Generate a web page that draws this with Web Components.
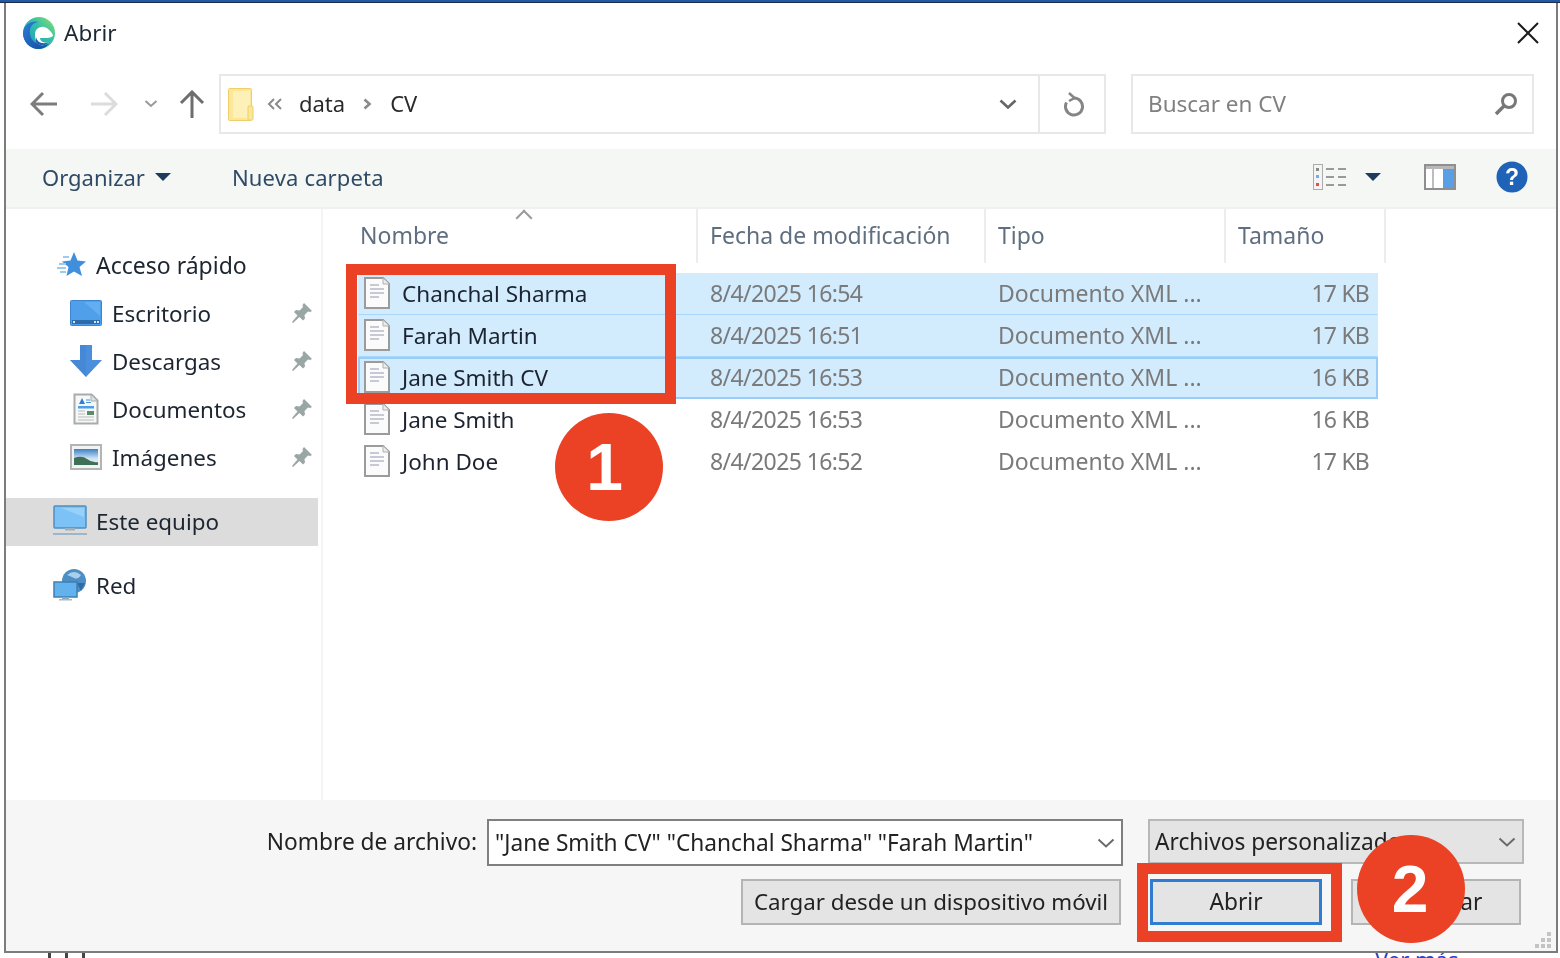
<!DOCTYPE html>
<html lang="es">
<head>
<meta charset="utf-8">
<title>Abrir</title>
<style>
    html, body { margin: 0; height: 100%; background: #fff; overflow: hidden; }
    body { font-family: "Noto Sans", "Open Sans", sans-serif; }
</style>
</head>
<body>
<top-edge></top-edge>
<open-dialog>
    <dialog-title slot="title">Abrir</dialog-title>
    <address-bar slot="address"></address-bar>
    <tool-bar slot="tools"></tool-bar>

    <nav-item slot="nav" icon="star" head>Acceso rápido</nav-item>
    <nav-item slot="nav" icon="desktop" pinned>Escritorio</nav-item>
    <nav-item slot="nav" icon="download" pinned>Descargas</nav-item>
    <nav-item slot="nav" icon="docs" pinned>Documentos</nav-item>
    <nav-item slot="nav" icon="pictures" pinned>Imágenes</nav-item>
    <nav-item slot="nav" icon="pc" head lift active style="margin-top:17px">Este equipo</nav-item>
    <nav-item slot="nav" icon="net" head lift style="margin-top:16px">Red</nav-item>

    <file-row slot="files" selected date="8/4/2025 16:54" size="17 KB">Chanchal Sharma</file-row>
    <file-row slot="files" selected date="8/4/2025 16:51" size="17 KB">Farah Martin</file-row>
    <file-row slot="files" selected focused date="8/4/2025 16:53" size="16 KB">Jane Smith CV</file-row>
    <file-row slot="files" date="8/4/2025 16:53" size="16 KB">Jane Smith</file-row>
    <file-row slot="files" date="8/4/2025 16:52" size="17 KB">John Doe</file-row>

    <dialog-footer slot="footer"></dialog-footer>
</open-dialog>
<page-behind></page-behind>

<red-box style="left:346px;top:264px;width:330px;height:140px"></red-box>
<red-box style="left:1137px;top:863px;width:205px;height:79px"></red-box>
<step-badge style="left:555px;top:413px;padding-right:9px">1</step-badge>
<step-badge style="left:1357px;top:835px;padding-right:2px">2</step-badge>

<script>
const ICONS = {
    star: `<svg width="34" height="26" viewBox="0 0 34 26"><path d="M21 0l3.500 8.500 8.500 1-6.500 5.500L29 24l-8-4.500L13.500 24l2-9L9 9.500l8.500-1z" fill="#3f8fdc"/><path d="M10 5h6M6 12h7M4 16h9M7 20h6" stroke="#9ccbf0" stroke-width="1.800"/></svg>`,
    desktop: `<svg width="32" height="26" viewBox="0 0 32 26"><rect x=".5" y=".5" width="31" height="25" rx="1" fill="#4f9fea" stroke="#3c86cf"/><path d="M2 2h28v14L14 2z" fill="#63aef0"/><rect x="2" y="20" width="28" height="4" fill="#2d6ca8"/><rect x="3" y="21" width="2" height="2" fill="#cfe6fa"/><rect x="24" y="21" width="2" height="2" fill="#cfe6fa"/><rect x="27" y="21" width="2" height="2" fill="#cfe6fa"/></svg>`,
    download: `<svg width="32" height="32" viewBox="0 0 32 32"><path d="M10 0h12v15h10L16 32 0 15h10z" fill="#4b8fdc"/><path d="M10 0h6v32L0 15h10z" fill="#3f80cc" opacity=".45"/></svg>`,
    docs: `<svg style="margin-left:3px" width="26" height="32" viewBox="0 0 26 32"><path d="M1.500 1.500h17l6 6v23h-23z" fill="#f6f7f7" stroke="#a9acac" stroke-width="2"/><path d="M18 2v6h6" fill="#dfe2e2" stroke="#a9acac"/><path d="M6 11l3-6 3 6z" fill="#2f7fd6"/><path d="M13 7h4M13 9.500h5" stroke="#4a90d9"/><rect x="5" y="13" width="16" height="2.500" fill="#4ba0e8"/><path d="M5 18h7M5 21h7M5 24h16M5 27h16" stroke="#b8bcbc"/><rect x="14" y="18" width="7" height="4" fill="#5d8a6a"/></svg>`,
    pictures: `<svg width="32" height="26" viewBox="0 0 32 26"><defs><linearGradient id="sky" x1="0" y1="0" x2="0" y2="1"><stop offset="0" stop-color="#3c7fc4"/><stop offset=".6" stop-color="#cfe4f4"/><stop offset="1" stop-color="#e6f0f6"/></linearGradient></defs><rect x="1" y="1" width="30" height="24" fill="#f2f3f3" stroke="#b3b5b5" stroke-width="2"/><rect x="4" y="5" width="24" height="16" fill="url(#sky)"/><path d="M4 14q8-3 13 1t11 3v3H4z" fill="#3f6f55"/></svg>`,
    pc: `<svg width="34" height="32" viewBox="0 0 34 32"><rect x="1" y="1" width="32" height="22" rx="1" fill="#7cc2f6" stroke="#4f8fbf" stroke-width="1.500"/><path d="M3 3h28v9L8 3z" fill="#97d0f8"/><rect x="12" y="23" width="10" height="2.500" fill="#9fb0bd"/><rect x="0" y="28" width="34" height="2" fill="#9fb6c8"/></svg>`,
    net: `<svg width="34" height="32" viewBox="0 0 34 32"><circle cx="21" cy="12" r="12" fill="#4d8ec4"/><path d="M14 6q7-6 14 0-3 5-7 3t-7-3z" fill="#a9cfe9"/><path d="M24 14l8 0-4 8z" fill="#2f6ea5"/><rect x="1" y="13" width="23" height="15" fill="#62b2ee" stroke="#3f7fb3" stroke-width="1.500"/><rect x="9" y="28" width="7" height="2" fill="#8ea7b9"/><rect x="6" y="30" width="13" height="1.500" fill="#a8bac8"/></svg>`,
    pin: `<svg width="22" height="22" viewBox="0 0 22 22"><path d="M13 1l8 8-2 1-2-.5-3.500 3.500.5 3.500-2 2-3.500-3.500L2 21l-1-1 5.500-6.500L3 10l2-2 3.500.5L12 5l-.5-2z" fill="#9aa6a6"/></svg>`,
    file: `<svg width="26" height="32" viewBox="0 0 26 32"><path d="M1 1h18l6 6v24H1z" fill="#fbfbfb" stroke="#9b9b9b" stroke-width="2"/><path d="M19 1v6h6" fill="#ececec" stroke="#b0b0b0"/><path d="M6 8h9M6 12h14M6 16h14M6 20h9" stroke="#b6b9c9" stroke-width="1.600"/></svg>`,
    chevron: `<svg width="18" height="10" viewBox="0 0 18 10"><path d="M1.500 1.500L9 8.500l7.500-7" fill="none" stroke="currentColor" stroke-width="2"/></svg>`
};

class TopEdge extends HTMLElement {
    constructor() {
        super();
        this.attachShadow({ mode: "open" });
        this.shadowRoot.innerHTML = `
        <style>
            :host {
                display: block;
                box-sizing: border-box;
                height: 3px;
                background: #1f5aa2;
                border-bottom: 1px solid #1a2c48;
            }
        </style>`;
    }
}

class OpenDialog extends HTMLElement {
    constructor() {
        super();
        this.attachShadow({ mode: "open" });
        this.shadowRoot.innerHTML = `
        <style>
            :host {
                display: flex;
                flex-direction: column;
                box-sizing: border-box;
                width: 1554px;
                height: 950px;
                margin-left: 4px;
                background: #fff;
                border: 2px solid #7c7c7c;
                border-top: 0;
                filter: blur(.45px);
            }
            .main { flex: 1; display: flex; min-height: 0; }
            .nav {
                width: 317px;
                box-sizing: border-box;
                padding-top: 32px;
                border-right: 2px solid #f4f4f4;
                display: flex;
                flex-direction: column;
            }
            .list { flex: 1; padding-left: 34px; }
            .head {
                height: 65px;
                display: grid;
                grid-template-columns: 341px 288px 240px 160px;
                font-size: 23px;
                color: #5f6f80;
            }
            .head span {
                box-sizing: border-box;
                padding: 10px 0 0 12px;
                height: 54px;
                border-right: 2px solid #ececec;
                position: relative;
            }
            .head span:first-child { padding-left: 3px; }
            .sort {
                position: absolute;
                left: 161px;
                top: 3px;
                width: 10px;
                height: 10px;
                border-left: 2px solid #9a9a9a;
                border-top: 2px solid #9a9a9a;
                transform: rotate(45deg);
                transform-origin: center;
            }
            .rows { display: flex; flex-direction: column; margin: -1px 0 0 1px; width: 1020px; }
        </style>
        <slot name="title"></slot>
        <slot name="address"></slot>
        <slot name="tools"></slot>
        <div class="main">
            <div class="nav"><slot name="nav"></slot></div>
            <div class="list">
                <div class="head">
                    <span>Nombre<i class="sort"></i></span>
                    <span>Fecha de modificación</span>
                    <span>Tipo</span>
                    <span>Tamaño</span>
                </div>
                <div class="rows"><slot name="files"></slot></div>
            </div>
        </div>
        <slot name="footer"></slot>`;
    }
}

class DialogTitle extends HTMLElement {
    constructor() {
        super();
        this.attachShadow({ mode: "open" });
        this.shadowRoot.innerHTML = `
        <style>
            :host {
                display: flex;
                align-items: center;
                box-sizing: border-box;
                height: 57px;
                padding: 2px 16px 0 16px;
                font-size: 22.5px;
                color: #1b2733;
            }
            svg.logo { margin-right: 8px; }
            .grow { flex: 1; }
        </style>
        <svg class="logo" width="34" height="34" viewBox="0 0 34 34">
            <defs>
                <linearGradient id="edgeTop" x1="0" y1="1" x2="1" y2="0"><stop offset="0" stop-color="#1e8fc8"/><stop offset=".6" stop-color="#35c1a8"/><stop offset="1" stop-color="#8ee06a"/></linearGradient>
                <linearGradient id="edgeLow" x1="0" y1="0" x2="1" y2="1"><stop offset="0" stop-color="#2b7fd8"/><stop offset="1" stop-color="#124a9c"/></linearGradient>
            </defs>
            <circle cx="17" cy="17" r="16" fill="url(#edgeTop)"/>
            <path d="M1 17C2 8 10 4 17 6c-6 0-10 5-9 12 1 8 9 13 19 10-3 3-7 5-11 5C8 33 1 26 1 17z" fill="url(#edgeLow)"/>
            <path d="M13 18c0-5 5-8 9-7 4 1 7 4 9 8 0 2-3 3-7 3h-6c0 3 4 6 9 4-3 3-6 4-9 3-4-2-5-7-5-11z" fill="#fff"/>
            <path d="M14 21c1 5 6 8 13 5-4 5-10 4-13 0z" fill="#1d5fb0"/>
        </svg>
        <slot></slot>
        <span class="grow"></span>
        <svg width="24" height="24" viewBox="0 0 24 24"><path d="M2 2l20 20M22 2L2 22" stroke="#1b1b1b" stroke-width="2" fill="none"/></svg>`;
    }
}

class AddressBar extends HTMLElement {
    constructor() {
        super();
        this.attachShadow({ mode: "open" });
        this.shadowRoot.innerHTML = `
        <style>
            :host {
                display: flex;
                align-items: center;
                height: 89px;
                padding: 14px 24px 15px 24px;
                box-sizing: border-box;
                font-size: 22px;
                color: #2a2a2a;
            }
            .nav-btns { display: flex; align-items: center; width: 189px; flex: none; }
            .path {
                width: 887px;
                height: 60px;
                flex: none;
                box-sizing: border-box;
                border: 2px solid #e8e8e8;
                display: flex;
                align-items: center;
                padding-left: 7px;
            }
            .folder { margin-right: 13px; }
            .crumb { margin-left: 16px; padding-bottom: 2px; }
            .sep { margin-left: 17px; }
            .crumb.cv { margin-left: 18px; }
            .grow { flex: 1; }
            .drop { width: 60px; display: flex; justify-content: center; color: #666; }
            .drop path { stroke-width: 2.600; }
            .refresh {
                width: 66px;
                height: 100%;
                box-sizing: border-box;
                padding-left: 3px;
                border-left: 2px solid #e8e8e8;
                display: flex;
                align-items: center;
                justify-content: center;
            }
            .search {
                margin-left: 25px;
                width: 403px;
                height: 60px;
                flex: none;
                box-sizing: border-box;
                border: 2px solid #e8e8e8;
                display: flex;
                align-items: center;
                padding: 0 14px 0 15px;
                color: #808080;
                font-size: 22.5px;
            }
            .search span:first-child { padding-bottom: 2px; }
        </style>
        <div class="nav-btns">
            <svg width="28" height="26" viewBox="0 0 28 26" style="margin-right:32px"><path d="M13 2L2 13l11 11M2 13h25" fill="none" stroke="#7c7c7c" stroke-width="3"/></svg>
            <svg width="28" height="26" viewBox="0 0 28 26" style="margin-right:26px"><path d="M15 2l11 11-11 11M26 13H1" fill="none" stroke="#dcdcdc" stroke-width="3"/></svg>
            <svg width="14" height="10" viewBox="0 0 14 10" style="margin-right:21px"><path d="M1.500 2L7 7l5.500-5" fill="none" stroke="#9a9a9a" stroke-width="2"/></svg>
            <svg width="26" height="28" viewBox="0 0 26 28"><path d="M2 13L13 2l11 11M13 2v26" fill="none" stroke="#6e6e6e" stroke-width="3"/></svg>
        </div>
        <div class="path">
            <svg class="folder" width="26" height="33" viewBox="0 0 26 33"><rect x=".5" y=".5" width="23" height="32" rx="1" fill="#fbe79a" stroke="#f0cf6a"/><path d="M5 3h17v27H5z" fill="#fdf0b8"/><rect x="20" y="18" width="5" height="14" rx="1" fill="#fbe79a" stroke="#f0cf6a"/></svg>
            <svg width="16" height="12" viewBox="0 0 16 12"><path d="M7 1L2 6l5 5M14 1L9 6l5 5" fill="none" stroke="#8a8a8a" stroke-width="2"/></svg>
            <span class="crumb">data</span>
            <svg class="sep" width="10" height="12" viewBox="0 0 10 12"><path d="M2.500 1.500L7.500 6l-5 4.500" fill="none" stroke="#8a8a8a" stroke-width="2.600"/></svg>
            <span class="crumb cv">CV</span>
            <span class="grow"></span>
            <span class="drop">${ICONS.chevron}</span>
            <span class="refresh"><svg width="24" height="26" viewBox="0 0 24 26"><path d="M12 7a8.500 8.500 0 1 1-7.500 4.500" fill="none" stroke="#858585" stroke-width="3"/><path d="M7 2l5.500 5L7 10" fill="none" stroke="#858585" stroke-width="2.500"/></svg></span>
        </div>
        <div class="search">
            <span>Buscar en CV</span>
            <span class="grow"></span>
            <svg width="24" height="24" viewBox="0 0 24 24"><circle cx="15" cy="9" r="6.500" fill="none" stroke="#777" stroke-width="3"/><path d="M10 14l-8 8" stroke="#777" stroke-width="3.500"/></svg>
        </div>`;
    }
}

class ToolBar extends HTMLElement {
    constructor() {
        super();
        this.attachShadow({ mode: "open" });
        this.shadowRoot.innerHTML = `
        <style>
            :host {
                display: flex;
                align-items: center;
                height: 60px;
                box-sizing: border-box;
                padding: 0 28px 2px 36px;
                background: #f5f7f5;
                border-bottom: 2px solid #f0f0f0;
                font-size: 22px;
                color: #2f4a66;
            }
            .caret {
                width: 0;
                height: 0;
                border: 8px solid transparent;
                border-top: 8px solid #1f3a5f;
                border-bottom: 0;
                display: inline-block;
            }
            .org { width: 190px; display: flex; align-items: center; gap: 10px; }
            .new { letter-spacing: .15px; }
            .grow { flex: 1; }
        </style>
        <span class="org">Organizar <i class="caret"></i></span>
        <span class="new">Nueva carpeta</span>
        <span class="grow"></span>
        <svg width="34" height="26" viewBox="0 0 34 26" style="margin-right:18px">
            <rect x=".5" y=".5" width="9" height="25" fill="#f4f4f4" stroke="#acacac"/>
            <rect x="3" y="4" width="3" height="3" fill="#8a8a8a"/><rect x="3" y="11" width="3" height="3" fill="#7da7ee"/><rect x="3" y="19" width="3" height="3" fill="#e05050"/>
            <path d="M13 5h8M25 5h8M13 13h8M25 13h8M13 21h8M25 21h8" stroke="#9a9a9a" stroke-width="2"/>
        </svg>
        <i class="caret" style="margin-right:43px"></i>
        <svg width="32" height="26" viewBox="0 0 32 26" style="margin-right:40px">
            <rect x="1" y="1" width="30" height="24" fill="#fff" stroke="#8f8f8f" stroke-width="2"/>
            <rect x="2" y="2" width="28" height="3" fill="#b8b8b8"/>
            <rect x="8" y="4" width="2" height="20" fill="#bdbdbd"/>
            <rect x="19" y="5" width="11" height="19" fill="#5a9fe6"/>
        </svg>
        <svg width="32" height="32" viewBox="0 0 32 32">
            <circle cx="16" cy="16" r="15.500" fill="#1f63b8"/>
            <text x="16" y="24" font-family="Liberation Sans, sans-serif" font-size="23" font-weight="700" text-anchor="middle" fill="#fff">?</text>
        </svg>`;
    }
}

class NavItem extends HTMLElement {
    constructor() {
        super();
        this.attachShadow({ mode: "open" });
    }

    connectedCallback() {
        let head = this.hasAttribute("head");
        let pinned = this.hasAttribute("pinned");
        this.shadowRoot.innerHTML = `
        <style>
            :host {
                display: flex;
                align-items: center;
                box-sizing: border-box;
                height: 48px;
                font-size: ${head ? 23 : 22.4}px;
                color: #1c2530;
                margin-right: 3px;
                padding-left: ${head ? 47 : 64}px;
            }
            :host([lift]) { padding-bottom: 2px; font-size: 22.4px; }
            :host([active]) { background: #dcdcdc; }
            .ic { width: ${head ? 43 : 42}px; display: flex; align-items: center; flex: none; }
            .grow { flex: 1; }
            .pin { margin-right: 5px; display: flex; }
        </style>
        <span class="ic">${ICONS[this.getAttribute("icon")]}</span>
        <slot></slot>
        <span class="grow"></span>
        ${pinned ? `<span class="pin">${ICONS.pin}</span>` : ""}`;
    }
}

class FileRow extends HTMLElement {
    constructor() {
        super();
        this.attachShadow({ mode: "open" });
    }

    connectedCallback() {
        this.shadowRoot.innerHTML = `
        <style>
            :host {
                display: grid;
                grid-template-columns: 351px 288px 300px 79px;
                box-sizing: border-box;
                height: 42px;
                padding-bottom: 2px;
                align-items: center;
                font-size: 23px;
                color: #7a7a7a;
                border: 1px solid transparent;
            }
            :host([selected]) {
                background: #d2ebfd;
                border-bottom-color: #a9d6fb;
            }
            :host([focused]) { border-color: #99cdf8; box-shadow: inset 0 0 0 1px #99cdf8; }
            .name { display: flex; align-items: center; gap: 12px; color: #1b2430; padding-left: 5px; font-size: 22.5px; }
            .date { letter-spacing: -.6px; }
            .size { text-align: right; padding-right: 8px; letter-spacing: -.8px; }
            svg { flex: none; }
        </style>
        <span class="name">${ICONS.file}<slot></slot></span>
        <span class="date">${this.getAttribute("date")}</span>
        <span>Documento XML ...</span>
        <span class="size">${this.getAttribute("size")}</span>`;
    }
}

class DialogFooter extends HTMLElement {
    constructor() {
        super();
        this.attachShadow({ mode: "open" });
        this.shadowRoot.innerHTML = `
        <style>
            :host {
                display: grid;
                grid-template-columns: 1fr 636px 401px;
                grid-template-rows: 47px 46px;
                row-gap: 13px;
                align-items: start;
                height: 151px;
                box-sizing: border-box;
                padding: 19px 32px 0 0;
                background: #f6f6f6;
                font-size: 22.7px;
                color: #222;
                position: relative;
            }
            label { justify-self: end; padding: 7px 10px 0 0; }
            .input, .select {
                display: flex;
                align-items: center;
                box-sizing: border-box;
                white-space: nowrap;
                overflow: hidden;
            }
            .input {
                height: 47px;
                background: #fff;
                border: 2px solid #7f7f7f;
                padding: 0 6px 0 6px;
            }
            .select {
                height: 45px;
                margin-left: 25px;
                background: #e4e4e4;
                border: 2px solid #b8b8b8;
                padding: 0 6px 0 5px;
            }
            .text { flex: 1; overflow: hidden; }
            .chev { color: #6a6a6a; display: flex; }
            .actions {
                grid-column: 1 / -1;
                display: flex;
                justify-content: flex-end;
                align-items: center;
                gap: 29px;
                margin-right: 3px;
            }
            button {
                all: unset;
                box-sizing: border-box;
                height: 46px;
                padding-bottom: 2px;
                background: #e4e4e4;
                border: 2px solid #b4b4b4;
                text-align: center;
                font: inherit;
                color: #222;
            }
            .upload { width: 380px; font-size: 22.3px; }
            .ok { width: 172px; border: 3px solid #2f7cd0; }
            .cancel { width: 170px; }
            .grip { position: absolute; right: 5px; bottom: 3px; }
        </style>
        <label>Nombre de archivo:</label>
        <div class="input"><span class="text">"Jane Smith CV" "Chanchal Sharma" "Farah Martin"</span><span class="chev">${ICONS.chevron}</span></div>
        <div class="select"><span class="text">Archivos personalizados</span><span class="chev">${ICONS.chevron}</span></div>
        <div class="actions">
            <button class="upload">Cargar desde un dispositivo móvil</button>
            <button class="ok">Abrir</button>
            <button class="cancel">Cancelar</button>
        </div>
        <svg class="grip" width="16" height="16" viewBox="0 0 16 16" fill="#c4c4c4">
            <rect x="12" y="0" width="4" height="4"/><rect x="6" y="6" width="4" height="4"/><rect x="12" y="6" width="4" height="4"/>
            <rect x="0" y="12" width="4" height="4"/><rect x="6" y="12" width="4" height="4"/><rect x="12" y="12" width="4" height="4"/>
        </svg>`;
    }
}

// sliver of the page under the dialog
class PageBehind extends HTMLElement {
    constructor() {
        super();
        this.attachShadow({ mode: "open" });
        this.shadowRoot.innerHTML = `
        <style>
            :host {
                display: block;
                height: 5px;
                overflow: hidden;
                position: relative;
                font-size: 22px;
                color: #2b3fc4;
            }
            span { display: block; margin: -8px 0 0 1375px; line-height: 28px; }
            i { position: absolute; top: 0; width: 3px; height: 5px; background: #444; }
        </style>
        <i style="left:48px"></i><i style="left:65px"></i><i style="left:82px"></i>
        <span>Ver más</span>`;
    }
}

class RedBox extends HTMLElement {
    constructor() {
        super();
        this.attachShadow({ mode: "open" });
        this.shadowRoot.innerHTML = `
        <style>
            :host {
                display: block;
                position: absolute;
                box-sizing: border-box;
                border: 11px solid #eb4225;
            }
        </style>`;
    }
}

class StepBadge extends HTMLElement {
    constructor() {
        super();
        this.attachShadow({ mode: "open" });
        this.shadowRoot.innerHTML = `
        <style>
            :host {
                display: flex;
                position: absolute;
                box-sizing: border-box;
                align-items: center;
                justify-content: center;
                width: 108px;
                height: 108px;
                border-radius: 50%;
                background: #eb4225;
                color: #fff;
                font: 700 66px "Liberation Sans", sans-serif;
            }
        </style>
        <slot></slot>`;
    }
}

customElements.define("top-edge", TopEdge);
customElements.define("open-dialog", OpenDialog);
customElements.define("dialog-title", DialogTitle);
customElements.define("address-bar", AddressBar);
customElements.define("tool-bar", ToolBar);
customElements.define("nav-item", NavItem);
customElements.define("file-row", FileRow);
customElements.define("dialog-footer", DialogFooter);
customElements.define("page-behind", PageBehind);
customElements.define("red-box", RedBox);
customElements.define("step-badge", StepBadge);
</script>
</body>
</html>
